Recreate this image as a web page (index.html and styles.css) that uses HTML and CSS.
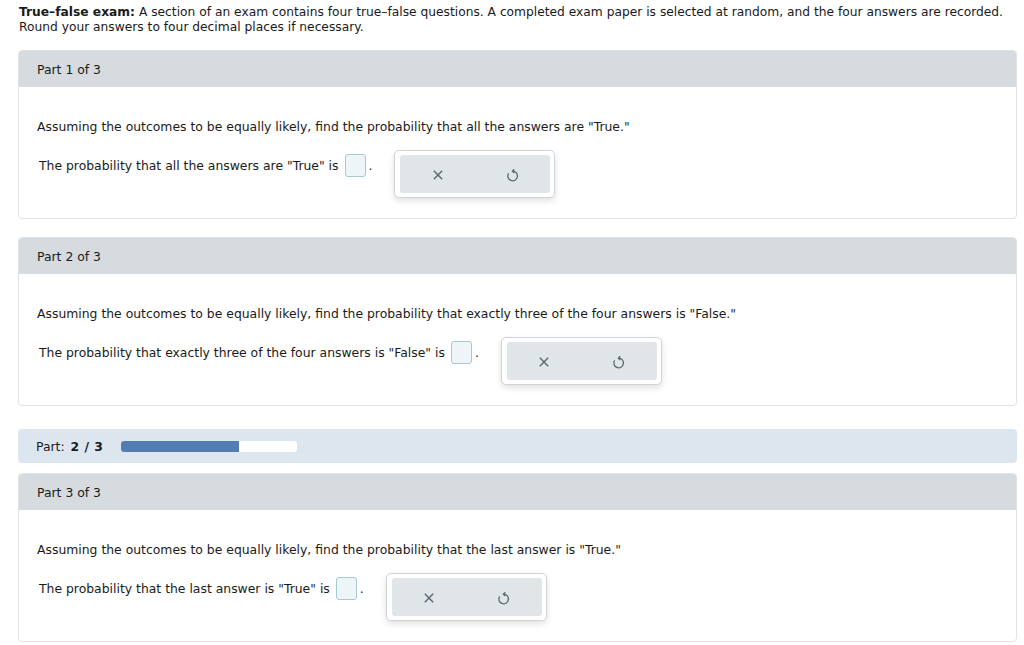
FILE: index.html
```html
<!DOCTYPE html>
<html>
<head>
<meta charset="utf-8">
<link rel="stylesheet" href="styles.css">
</head>
<body>
<div class="intro"><b>True–false exam:</b> A section of an exam contains four true–false questions. A completed exam paper is selected at random, and the four answers are recorded. Round your answers to four decimal places if necessary.</div>

<section class="panel first">
  <div class="panel-head">Part 1 of 3</div>
  <div class="panel-body">
    <p class="question">Assuming the outcomes to be equally likely, find the probability that all the answers are "True."</p>
    <div class="answer-row">
      <div class="answer">The probability that all the answers are "True" is <span class="input"></span><span class="dot">.</span></div>
      <div class="tools">
        <div class="tools-inner">
          <svg class="ico" width="14" height="14" viewBox="0 0 14 14"><path d="M2.8 2.8 L11.2 11.2 M11.2 2.8 L2.8 11.2" stroke="#5b6770" stroke-width="1.4" fill="none"/></svg>
          <svg class="ico" width="14" height="16" viewBox="0 0 14 16"><path d="M6.6 4.2 A4.8 4.8 0 1 1 2.6 6.4" stroke="#5b6770" stroke-width="1.3" fill="none"/><path d="M8.3 2.3 L6.4 4.2 L8.3 6.1" stroke="#5b6770" stroke-width="1.3" fill="none"/></svg>
        </div>
      </div>
    </div>
  </div>
</section>

<section class="panel">
  <div class="panel-head">Part 2 of 3</div>
  <div class="panel-body">
    <p class="question">Assuming the outcomes to be equally likely, find the probability that exactly three of the four answers is "False."</p>
    <div class="answer-row">
      <div class="answer">The probability that exactly three of the four answers is "False" is <span class="input"></span><span class="dot">.</span></div>
      <div class="tools">
        <div class="tools-inner">
          <svg class="ico" width="14" height="14" viewBox="0 0 14 14"><path d="M2.8 2.8 L11.2 11.2 M11.2 2.8 L2.8 11.2" stroke="#5b6770" stroke-width="1.4" fill="none"/></svg>
          <svg class="ico" width="14" height="16" viewBox="0 0 14 16"><path d="M6.6 4.2 A4.8 4.8 0 1 1 2.6 6.4" stroke="#5b6770" stroke-width="1.3" fill="none"/><path d="M8.3 2.3 L6.4 4.2 L8.3 6.1" stroke="#5b6770" stroke-width="1.3" fill="none"/></svg>
        </div>
      </div>
    </div>
  </div>
</section>

<div class="progress">
  <span class="plabel">Part: <b>2 / 3</b></span>
  <div class="track"><div class="fill" style="width:66.67%"></div></div>
</div>

<section class="panel third">
  <div class="panel-head">Part 3 of 3</div>
  <div class="panel-body">
    <p class="question">Assuming the outcomes to be equally likely, find the probability that the last answer is "True."</p>
    <div class="answer-row">
      <div class="answer">The probability that the last answer is "True" is <span class="input"></span><span class="dot">.</span></div>
      <div class="tools">
        <div class="tools-inner">
          <svg class="ico" width="14" height="14" viewBox="0 0 14 14"><path d="M2.8 2.8 L11.2 11.2 M11.2 2.8 L2.8 11.2" stroke="#5b6770" stroke-width="1.4" fill="none"/></svg>
          <svg class="ico" width="14" height="16" viewBox="0 0 14 16"><path d="M6.6 4.2 A4.8 4.8 0 1 1 2.6 6.4" stroke="#5b6770" stroke-width="1.3" fill="none"/><path d="M8.3 2.3 L6.4 4.2 L8.3 6.1" stroke="#5b6770" stroke-width="1.3" fill="none"/></svg>
        </div>
      </div>
    </div>
  </div>
</section>
</body>
</html>
```

FILE: styles.css
```css
html, body {
  margin: 0;
  padding: 0;
  background: #ffffff;
}
body {
  font-family: "DejaVu Sans", Verdana, sans-serif;
  font-size: 12.4px;
  color: #1a1a1a;
  padding: 5px 7px 0 18px;
  overflow: hidden;
}
.intro {
  font-size: 12.25px;
  line-height: 15px;
  padding-left: 1px;
  margin-right: -6px;
  margin-bottom: 15px;
}
.panel {
  border: 1px solid #e0e3e5;
  border-radius: 4px;
  overflow: hidden;
  margin-bottom: 18px;
}
.panel-head {
  background: #d5dbde;
  height: 36px;
  line-height: 38px;
  padding-left: 18px;
}
.panel-body {
  padding: 32px 18px 20px 18px;
}
.question {
  margin: 0;
  line-height: 16px;
}
.answer-row {
  display: flex;
  align-items: flex-start;
  margin-top: 15px;
}
.answer {
  display: flex;
  align-items: center;
  margin-top: 3px;
  padding-left: 2px;
  height: 24px;
}
.input {
  display: inline-block;
  width: 19px;
  height: 21px;
  border: 1px solid #a9c8d6;
  background: #edf5f8;
  border-radius: 3px;
  margin-left: 6px;
}
.dot {
  margin-left: 3px;
}
.tools {
  margin-left: 22px;
  border: 1px solid #cfd4d7;
  border-radius: 5px;
  padding: 4px 4px 4px 5px;
  background: #fff;
  box-shadow: 0 3px 6px rgba(0,0,0,0.12);
}
.tools-inner {
  width: 150px;
  height: 38px;
  background: #e0e5e8;
  border-radius: 3px;
  display: flex;
  align-items: center;
  justify-content: space-around;
}
.ico {
  display: block;
  margin-top: 2px;
}
.progress {
  display: flex;
  align-items: center;
  height: 34px;
  background: #dde6ef;
  border-radius: 4px;
  margin-top: 23px;
  margin-bottom: 10px;
  padding-left: 18px;
}
.plabel b {
  margin-left: 2px;
  letter-spacing: 0.5px;
}
.track {
  width: 176px;
  height: 11px;
  background: #fff;
  border-radius: 3px;
  margin-left: 18px;
  overflow: hidden;
}
.fill {
  height: 100%;
  background: #527db3;
}
.third {
  margin-bottom: 0;
}
```
